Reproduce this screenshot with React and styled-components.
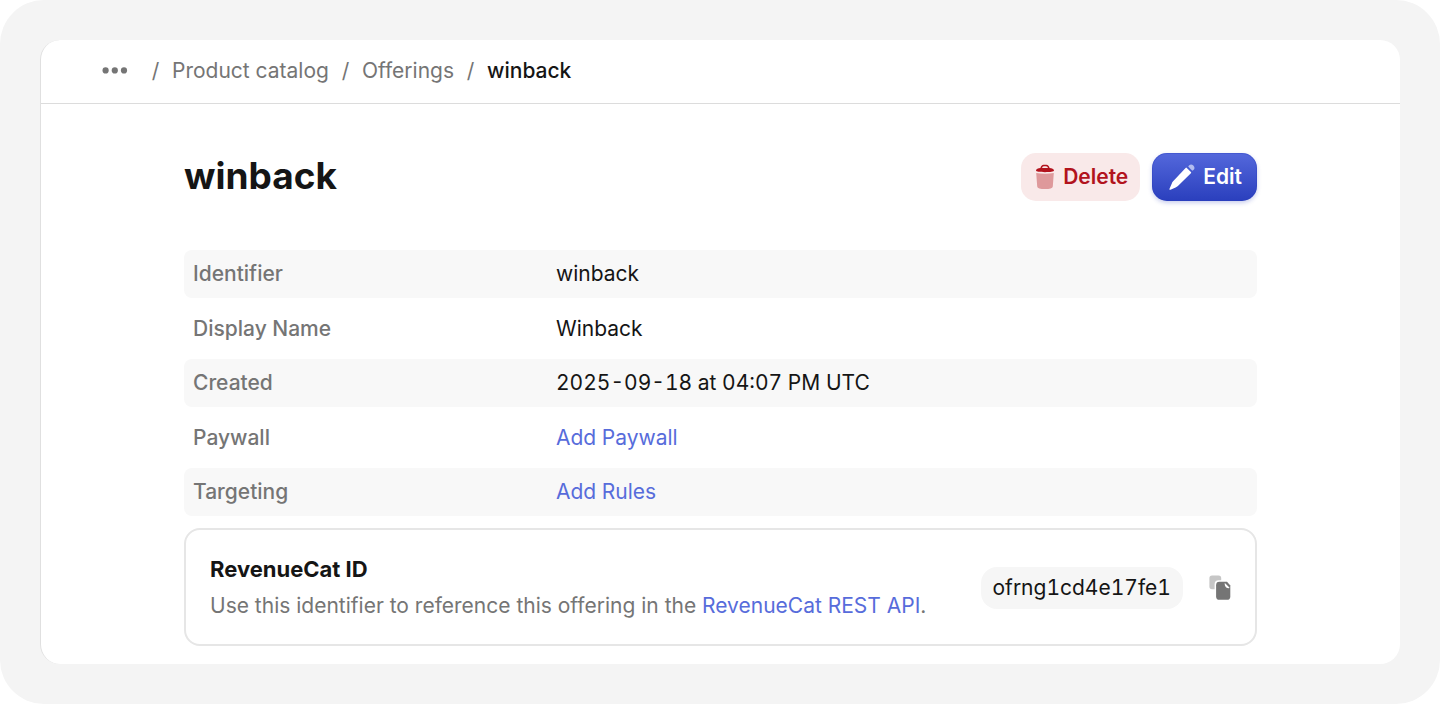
import React from 'react'
import styled, { createGlobalStyle } from 'styled-components'

const crumbs = ['Product catalog', 'Offerings']

const details = [
    { label: 'Identifier', value: 'winback' },
    { label: 'Display Name', value: 'Winback' },
    { label: 'Created', value: '2025-09-18 at 04:07 PM UTC' },
    { label: 'Paywall', value: 'Add Paywall', link: true },
    { label: 'Targeting', value: 'Add Rules', link: true },
]

function App() {
    return (
        <Frame>
            <GlobalStyle />
            <Panel>
                <Breadcrumbs aria-label="Breadcrumb">
                    <MoreButton type="button" aria-label="Show more">
                        <svg width="26" height="8" viewBox="0 0 26 8" fill="currentColor">
                            <circle cx="3.6" cy="3.4" r="3.1" />
                            <circle cx="12.8" cy="3.4" r="3.1" />
                            <circle cx="22" cy="3.4" r="3.1" />
                        </svg>
                    </MoreButton>
                    {crumbs.map((crumb) => (
                        <React.Fragment key={crumb}>
                            <Slash>/</Slash>
                            <Crumb href="#">{crumb}</Crumb>
                        </React.Fragment>
                    ))}
                    <Slash>/</Slash>
                    <CurrentCrumb aria-current="page">winback</CurrentCrumb>
                </Breadcrumbs>
                <Content>
                    <Header>
                        <Title>winback</Title>
                        <Actions>
                            <DeleteButton type="button">
                                <TrashIcon />
                                Delete
                            </DeleteButton>
                            <EditButton type="button">
                                <PencilIcon />
                                Edit
                            </EditButton>
                        </Actions>
                    </Header>
                    <Details>
                        {details.map(({ label, value, link }) => (
                            <Row key={label}>
                                <Label>{label}</Label>
                                <Value>{link ? <Link href="#">{value}</Link> : value}</Value>
                            </Row>
                        ))}
                    </Details>
                    <Card>
                        <CardText>
                            <CardTitle>RevenueCat ID</CardTitle>
                            <p>
                                Use this identifier to reference this offering in the{' '}
                                <Link href="#">RevenueCat REST API</Link>.
                            </p>
                        </CardText>
                        <Code>ofrng1cd4e17fe1</Code>
                        <CopyButton type="button" aria-label="Copy identifier">
                            <CopyIcon />
                        </CopyButton>
                    </Card>
                </Content>
            </Panel>
        </Frame>
    )
}

export default App

const TrashIcon = () => (
    <svg width="20" height="26" viewBox="0 0 20 26">
        <path d="M1.2 9Q10 10.6 18.8 9L17.8 22.4Q17.4 25 10 25Q2.6 25 2.2 22.4Z" fill="#de999b" />
        <path
            d="M1 6.6C1 5.2 3.2 4.4 5.4 4.1C5.8 2.1 7 .8 8.6 .8H11.4C13 .8 14.2 2.1 14.6 4.1C16.8 4.4 19 5.2 19 6.6C19 7.7 15 8.2 10 8.2S1 7.7 1 6.6Z"
            fill="#b2131d"
        />
        <path d="M7 4Q7.4 2.2 8.8 2.2H11.2Q12.6 2.2 13 4Z" fill="#f9e9e9" />
    </svg>
)

const PencilIcon = () => (
    <svg width="26" height="26" viewBox="0 0 26 26">
        <path
            d="M16.6 3.9Q17.2 3.3 17.8 3.9L21.9 8Q22.5 8.6 21.9 9.2L8.9 21.9Q7.9 22.8 6.6 23.4L1.5 25.7Q.1 26.2.5 24.8L2.7 19.7Q3.2 18.3 4.1 17.3Z"
            fill="#fff"
        />
        <path d="M19.2 2.5L20.2 1.3Q22.2-.4 24.4 1.6Q26.4 3.8 24.7 5.7L23.4 6.8Q21.2 4.8 19.2 2.5Z" fill="#b3bdf0" />
    </svg>
)

const CopyIcon = () => (
    <svg width="22" height="26" viewBox="0 0 22 26">
        <path
            d="M3 .5H9.6Q12.2.5 12.2 3.2V5.2H9.6Q5.6 5.2 5.6 9.2V14.2H3Q.4 14.2.4 11.5V3.2Q.4.5 3 .5Z"
            fill="#c6c6c6"
        />
        <path
            d="M10.4 6.8H18L21.3 10.4V21.4Q21.3 24.8 18 24.8H10.4Q7.1 24.8 7.1 21.4V10.2Q7.1 6.8 10.4 6.8Z"
            fill="#757575"
        />
        <path d="M15.6 8.4Q15.8 8 16.4 8.4L20.4 12.6Q20.6 13.3 19.8 13.3Q15.8 12.9 15.6 8.4Z" fill="#fff" />
    </svg>
)

const GlobalStyle = createGlobalStyle`
 *, *::before, *::after {
     box-sizing: border-box;
 }
 body {
     margin: 0;
     background: #fff;
     color: #151515;
     font-family: Inter, 'Liberation Sans', sans-serif;
     font-size: 21px;
     line-height: 28px;
 }
 h1, h2, p, dl, dd {
     margin: 0;
 }
 button {
     border: 0;
     padding: 0;
     font: inherit;
     cursor: pointer;
 }
 svg {
     display: block;
     flex: none;
 }
`

const Frame = styled.div`
 min-height: 100vh;
 padding: 40px;
 background: #f4f4f4;
 border-radius: 44px;
`

const Panel = styled.main`
 min-height: calc(100vh - 80px);
 background: #fff;
 border-left: 1px solid #e0e0e0;
 border-radius: 20px;
`

const Breadcrumbs = styled.nav`
 display: flex;
 align-items: center;
 height: 64px;
 padding: 0 61px 2px;
 border-bottom: 1px solid #dcdcdc;
 color: #757575;
`

const MoreButton = styled.button`
 margin-right: 11px;
 background: none;
 color: #757575;
`

const Slash = styled.span`
 width: 33px;
 text-align: center;
`

const Crumb = styled.a`
 color: inherit;
 text-decoration: none;
`

const CurrentCrumb = styled.span`
 color: #151515;
 font-weight: 500;
`

const Content = styled.div`
 padding: 49px 143px 18px;
`

const Header = styled.header`
 display: flex;
 align-items: center;
 justify-content: space-between;
 margin-bottom: 49px;
`

const Title = styled.h1`
 padding-bottom: 2px;
 font-size: 37px;
 line-height: 46px;
 font-weight: 700;
`

const Actions = styled.div`
 display: flex;
 gap: 12px;
`

const Button = styled.button`
 display: flex;
 align-items: center;
 gap: 8px;
 height: 48px;
 border-radius: 15px;
 font-weight: 600;
`

const DeleteButton = styled(Button)`
 padding: 0 12px 0 14px;
 background: #f9e9e9;
 color: #b2131d;
`

const EditButton = styled(Button)`
 padding: 0 15px 0 17px;
 background: linear-gradient(#5468dc, #2a3fbd);
 color: #fff;
 box-shadow: 0 2px 4px rgba(42, 63, 189, 0.25), inset 0 0 0 1px rgba(42, 63, 189, 0.35);
`

const Details = styled.dl`
 display: grid;
 gap: 6px;
 margin-bottom: 12px;
`

const Row = styled.div`
 display: grid;
 grid-template-columns: 363px 1fr;
 align-items: center;
 min-height: 48px;
 padding: 0 9px;
 border-radius: 8px;
 &:nth-child(odd) {
     background: #f8f8f8;
 }
 &:nth-child(even) {
     min-height: 49px;
 }
`

const Label = styled.dt`
 color: #757575;
 font-weight: 500;
`

const Value = styled.dd`
 font-variant-numeric: tabular-nums;
`

const Link = styled.a`
 color: #576cdb;
 text-decoration: none;
`

const Card = styled.section`
 display: flex;
 align-items: center;
 padding: 22px 24px 21px;
 border: 2px solid #e6e6e6;
 border-radius: 16px;
`

const CardText = styled.div`
 display: grid;
 flex: 1;
 gap: 3px;
 color: #757575;
 line-height: 34px;
`

const CardTitle = styled.h2`
 color: #151515;
 font-size: 22px;
 line-height: 34px;
 font-weight: 700;
`

const Code = styled.code`
 padding: 7px 12px;
 background: #f6f6f6;
 border-radius: 16px;
 font-family: inherit;
 font-variant-numeric: tabular-nums;
`

const CopyButton = styled.button`
 margin-left: 26px;
 background: none;
`
